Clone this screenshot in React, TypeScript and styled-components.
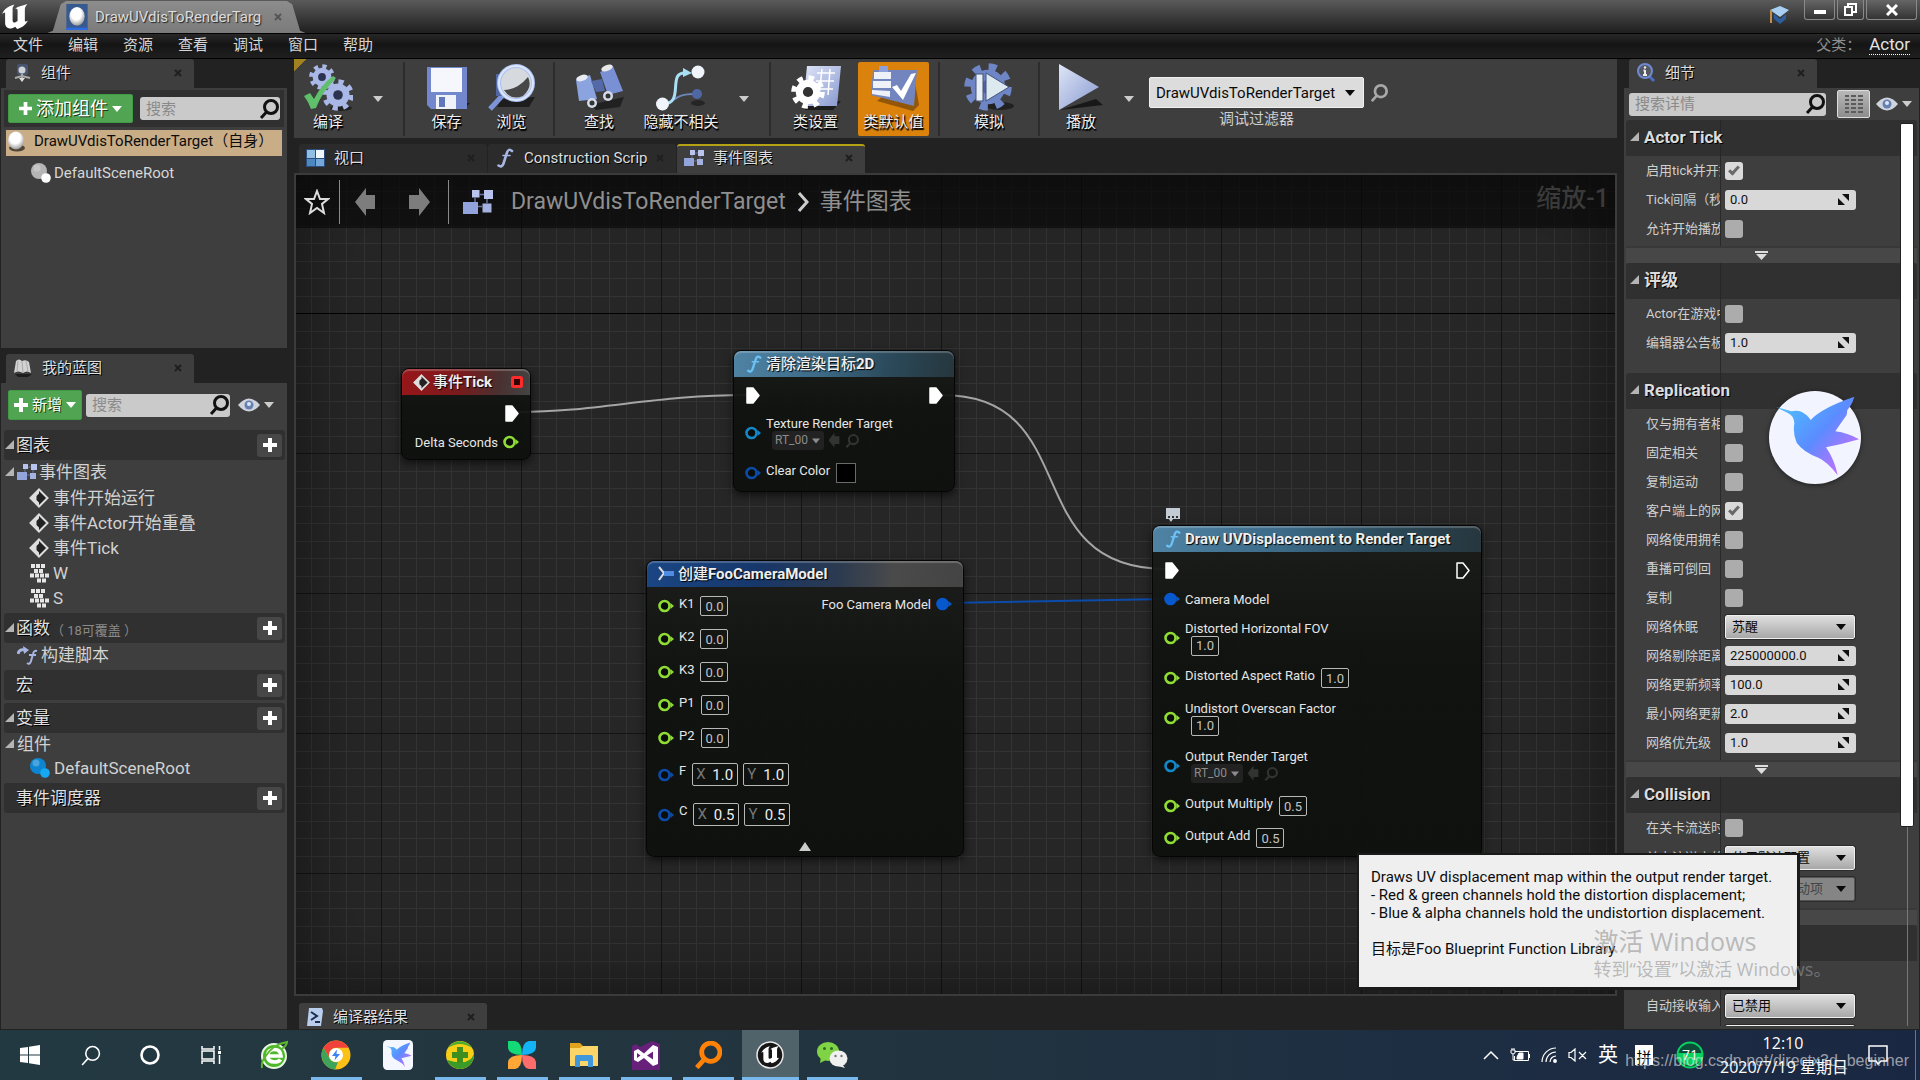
import React from "react";
import styled, { createGlobalStyle, css } from "styled-components";

const UI = `Roboto, "Noto Sans CJK SC", sans-serif`;
const SHELL = `"Open Sans", "Noto Sans CJK SC", sans-serif`;

const Global = createGlobalStyle`
  *, *::before, *::after { box-sizing: border-box; }
  body { margin: 0; background: #222; }
  button, input, select { font: inherit; color: inherit; margin: 0; }
  button { cursor: pointer; }
  svg { display: block; flex: none; }
  h1, h2, p, ul { margin: 0; padding: 0; font: inherit; list-style: none; }
`;

/* ---------- shell ---------- */
const Screen = styled.div`
  position: relative;
  display: grid;
  grid-template-rows: 34px 25px minmax(0, 1fr) 50px;
  height: 100vh;
  overflow: hidden;
  background: #222;
  color: #d6d6d6;
  font: 15px/20px ${UI};
`;
const TitleBar = styled.header`
  display: flex;
  align-items: flex-start;
  height: 34px;
  background: linear-gradient(#5a5a5a, #484848 30%, #212121 95%);
  border-bottom: 1px solid #000;
  overflow: hidden;
`;
const LogoBox = styled.div`
  width: 45px;
  height: 33px;
  padding: 4px 0 0 2px;
  flex: none;
`;
const DocTab = styled.div`
  display: flex;
  align-items: center;
  gap: 7px;
  width: 263px;
  height: 33px;
  padding: 0 26px 2px 21px;
  margin-top: 1px;
  background: linear-gradient(#8c8c8c, #7a7a7a);
  clip-path: polygon(0 100%, 3% 90%, 6% 10%, 8% 0, 92% 0, 94% 10%, 97% 90%, 100% 100%);
  color: #dcdcdc;
  text-shadow: 1px 1px 1px #222;
  white-space: nowrap;
`;
const DocName = styled.span`
  flex: 1;
`;
const Spacer = styled.div`
  flex: 1;
`;
const Graduate = styled.div`
  padding: 5px 15px 0 0;
`;
const WinControls = styled.div`
  display: flex;
  gap: 2px;
  padding-right: 3px;
`;
const WinButton = styled.button<{ $w: number }>`
  display: grid;
  place-items: center;
  width: ${(p) => p.$w}px;
  height: 20px;
  padding: 0;
  border: 1px solid #8a8a8a;
  border-top: 0;
  border-radius: 0 0 3px 3px;
  background: linear-gradient(#666, #333);
`;
const MenuBar = styled.nav`
  display: flex;
  align-items: center;
  padding: 0 10px 3px 13px;
  background: linear-gradient(#272727, #151515 45%, #1f1f1f);
  border-bottom: 1px solid #000;
`;
const MenuItem = styled.button`
  width: 55px;
  padding: 0;
  border: 0;
  background: none;
  text-align: left;
  line-height: 20px;
`;
const ParentLabel = styled.span`
  padding-right: 8px;
  color: #8e8e8e;
`;
const ParentLink = styled.a`
  color: #e2e2e2;
  font-size: 17px;
  line-height: 19px;
  text-decoration: none;
  border-bottom: 1px dotted #fff;
`;
const Main = styled.main`
  display: grid;
  grid-template-columns: 286px minmax(0, 1fr) 295px;
  gap: 7px;
  padding: 0 1px 1px;
  min-height: 0;
`;
const Column = styled.div`
  display: flex;
  flex-direction: column;
  min-width: 0;
  min-height: 0;
`;

/* ---------- tabs and panels ---------- */
const TabStrip = styled.div<{ $top?: number; $cut?: boolean }>`
  display: flex;
  gap: 1px;
  flex: none;
  height: ${(p) => (p.$cut ? "33px" : "auto")};
  overflow: hidden;
  padding: ${(p) => p.$top ?? 0}px 0 0 5px;
`;
const TabBox = styled.div<{ $idle?: boolean; $marked?: boolean }>`
  display: flex;
  align-items: center;
  gap: 9px;
  width: 188px;
  height: 29px;
  padding: 0 12px 3px 7px;
  background: ${(p) => (p.$idle ? "#2b2b2b" : "#3e3e3e")};
  border-top: 2px solid ${(p) => (p.$marked ? "#b5a114" : "transparent")};
  border-radius: 3px 3px 0 0;
  color: #dedede;
  text-shadow: 1px 1px 0 #000;
`;
const TabName = styled.span`
  flex: 1;
  overflow: hidden;
  white-space: nowrap;
`;
const Panel = styled.section<{ $grow?: boolean }>`
  display: flex;
  flex-direction: column;
  ${(p) => (p.$grow ? "flex: 1; min-height: 0;" : "height: 260px;")}
  background: #3e3e3e;
  overflow: hidden;
`;
const barKinds = {
  dark: "height: 37px; margin: 2px 3px 3px; background: #303030;",
  tall: "height: 44px; margin: 0 3px 3px;",
  slim: "height: 32px; margin: 0 3px 0 1px;",
};
const PanelBar = styled.div<{ $kind: keyof typeof barKinds }>`
  display: flex;
  align-items: center;
  gap: 4px;
  flex: none;
  padding: 0 4px;
  ${(p) => barKinds[p.$kind]}
`;
const GreenButton = styled.button<{ $big?: boolean }>`
  display: flex;
  align-items: center;
  justify-content: center;
  gap: 4px;
  width: ${(p) => (p.$big ? 125 : 74)}px;
  height: ${(p) => (p.$big ? 29 : 30)}px;
  padding: 0;
  border: 1px solid #3f9c45;
  border-radius: 2px;
  background: #50a452;
  color: #fff;
  font-size: ${(p) => (p.$big ? 18 : 15)}px;
  text-shadow: 1px 1px 0 #143d16;
  white-space: nowrap;
`;
const SearchBox = styled.label<{ $push?: boolean }>`
  display: flex;
  align-items: center;
  flex: 1;
  height: 23px;
  margin-left: ${(p) => (p.$push ? 3 : 0)}px;
  padding: 0 1px 0 6px;
  border-radius: 3px;
  background: #cacaca;
  min-width: 0;
`;
const SearchInput = styled.input`
  flex: 1;
  min-width: 0;
  padding: 0;
  border: 0;
  outline: 0;
  background: none;
  color: #222;
  &::placeholder { color: #8a8a8a; }
`;
const IconButton = styled.button<{ $roomy?: boolean }>`
  display: flex;
  align-items: center;
  gap: 4px;
  margin: ${(p) => (p.$roomy ? "0 6px 0 4px" : 0)};
  padding: 0;
  border: 0;
  background: none;
`;
const SelectedRow = styled.div`
  display: flex;
  align-items: center;
  gap: 9px;
  height: 26px;
  margin: 0 5px;
  padding: 0 0 4px 1px;
  background: #c8ad87;
  color: #0c0c0c;
  white-space: nowrap;
`;
const ChildRow = styled.div`
  display: flex;
  align-items: center;
  gap: 3px;
  height: 34px;
  padding-left: 29px;
`;
const ListHead = styled.div<{ $gap?: number }>`
  display: flex;
  align-items: center;
  gap: 1px;
  height: 30px;
  margin: ${(p) => p.$gap ?? 0}px 2px 0 3px;
  padding: 0 3px 0 1px;
  background: #303030;
  border-radius: 3px;
  font-size: 17px;
  color: #e0e0e0;
  text-shadow: 1px 1px 0 #000;
`;
const Note = styled.small`
  padding-top: 5px;
  font-size: 13px;
  color: #8a8a8a;
  text-shadow: none;
`;
const PlusButton = styled.button`
  display: grid;
  place-items: center;
  width: 25px;
  height: 23px;
  margin-left: auto;
  padding: 0;
  border: 0;
  border-radius: 3px;
  background: #474747;
`;
const TreeRow = styled.li<{ $indent?: boolean; $h?: number }>`
  display: flex;
  align-items: center;
  gap: ${(p) => (p.$indent ? 4 : 2)}px;
  height: ${(p) => p.$h ?? 25}px;
  padding: 0 0 2px ${(p) => (p.$indent ? 28 : 4)}px;
  font-size: 17px;
  color: #d2d2d2;
`;
const CaretSlot = styled.span`
  width: 10px;
  flex: none;
`;

/* ---------- toolbar ---------- */
const Toolbar = styled.div`
  display: flex;
  flex: none;
  height: 79px;
  background: linear-gradient(135deg, #a28120 9px, transparent 9px), #3e3e3e;
`;
const ToolButton = styled.button<{ $w: number; $on?: boolean }>`
  display: flex;
  flex-direction: column;
  align-items: center;
  flex: none;
  width: ${(p) => p.$w}px;
  padding: 4px 0 0;
  border: 0;
  border-radius: 2px;
  background: none;
  color: #eee;
  line-height: 23px;
  text-shadow: 1px 1px 1px #000, 1px 2px 1px #000;
  white-space: nowrap;
  ${(p) =>
    p.$on &&
    css`
      margin: 3px 0 2px 7px;
      padding-top: 1px;
      background: #da820c;
    `}
`;
const DropButton = styled.button`
  display: grid;
  place-items: center;
  width: 32px;
  padding: 0;
  border: 0;
  background: none;
`;
const Divider = styled.div`
  width: 2px;
  margin: 3px 9px 2px;
  background: #2c2c2c;
`;
const DebugArea = styled.div`
  display: grid;
  grid-template-columns: auto auto;
  align-content: start;
  align-items: center;
  column-gap: 6px;
  padding: 18px 0 0 4px;
`;
const DebugCaption = styled.label`
  padding-top: 1px;
  text-align: center;
  color: #cfcfcf;
`;
const SelectWrap = styled.span<{ $w?: number; $h?: number; $off?: boolean }>`
  display: inline-grid;
  align-items: center;
  width: ${(p) => p.$w ?? 130}px;
  height: ${(p) => p.$h ?? 24}px;
  border: 1px solid ${(p) => (p.$off ? "#555" : "#f0f0f0")};
  border-radius: 2px;
  outline: ${(p) => (p.$h ? "0" : "1px solid #2b2b2b")};
  background: ${(p) => (p.$off ? "#858585" : p.$h ? "#dcdcdc" : "linear-gradient(#dedede, #a8a8a8)")};
  color: ${(p) => (p.$off ? "#444" : "#0a0a0a")};
  & > * { grid-area: 1 / 1; }
  & > svg { justify-self: end; margin-right: 8px; pointer-events: none; }
`;
const SelectBase = styled.select`
  appearance: none;
  width: 100%;
  padding: 0 6px;
  border: 0;
  outline: 0;
  background: none;
  opacity: 1;
`;

/* ---------- graph ---------- */
const GraphFrame = styled.section`
  flex: 1;
  display: flex;
  min-height: 0;
  border: 2px solid #3b3b3b;
`;
const Canvas = styled.div`
  position: relative;
  flex: 1;
  overflow: hidden;
  background: #262626;
`;
const Backdrop = styled.svg`
  position: absolute;
  inset: 0;
  width: 100%;
  height: 100%;
`;
const Vignette = styled.div`
  position: absolute;
  inset: 0;
  box-shadow: inset 0 0 70px rgba(0, 0, 0, 0.5);
  pointer-events: none;
`;
const GraphBar = styled.div`
  position: relative;
  display: flex;
  align-items: center;
  height: 53px;
  padding: 0 6px 0 8px;
  background: rgba(8, 8, 8, 0.68);
  color: #8f8f8f;
  font-size: 23px;
  line-height: 30px;
`;
const BarLine = styled.div`
  width: 1px;
  height: 44px;
  margin: 0 14px 0 9px;
  background: #8a8a8a;
`;
const NavGroup = styled.div`
  display: flex;
  gap: 29px;
  padding-right: 8px;
`;
const NavButton = styled.button`
  padding: 0;
  border: 0;
  background: none;
`;
const Crumb = styled.h1`
  display: flex;
  align-items: center;
  gap: 11px;
  padding-left: 18px;
`;
const ZoomText = styled.span`
  margin-left: auto;
  padding-bottom: 6px;
  color: #3a3a3a;
  font-size: 25px;
  font-weight: 500;
`;
const NodeBox = styled.article<{ $x: number; $y: number; $w: number }>`
  position: absolute;
  left: ${(p) => p.$x}px;
  top: ${(p) => p.$y}px;
  width: ${(p) => p.$w}px;
  border: 1px solid #050505;
  border-radius: 8px;
  background: linear-gradient(rgba(28, 29, 28, 0.96), rgba(15, 18, 14, 0.94) 40%, rgba(13, 16, 13, 0.95));
  box-shadow: 0 3px 8px rgba(0, 0, 0, 0.6);
  color: #e6e6e6;
  font-size: 13px;
  line-height: 15px;
`;
const tones = {
  red: "linear-gradient(100deg, #98161a, #7a1a1c 45%, #4a3030 75%, #444)",
  blue: "linear-gradient(95deg, #1a4684, #17376a 35%, #2b3a50 60%, #4a4a4a 78%, #444)",
  cyan: "linear-gradient(95deg, #4f83a4, #3c6a87 40%, #2b4a5b 70%, #26363d)",
};
const NodeHead = styled.h2<{ $tone: keyof typeof tones }>`
  display: flex;
  align-items: center;
  height: 26px;
  padding: 0 7px 0 11px;
  border-radius: 7px 7px 0 0;
  background: ${(p) => tones[p.$tone]};
  box-shadow: inset 0 2px 1px rgba(255, 255, 255, 0.22);
  color: #efefef;
  font-size: 15px;
  font-weight: 700;
  text-shadow: 1px 1px 1px #000;
  white-space: nowrap;
  & > svg:first-child { margin-right: 3px; }
`;
const Han = styled.span`
  font-weight: 500;
`;
const ExecRow = styled.div`
  display: flex;
  align-items: center;
  justify-content: space-between;
  height: 36px;
  padding: 0 11px 0 12px;
`;
const PinList = styled.ul<{ $gap?: number; $top?: number }>`
  display: flex;
  flex-direction: column;
  gap: ${(p) => p.$gap ?? 12}px;
  padding: ${(p) => p.$top ?? 2}px 11px 8px;
`;
const PinRow = styled.li<{ $right?: boolean; $min?: number }>`
  display: flex;
  align-items: center;
  justify-content: ${(p) => (p.$right ? "flex-end" : "flex-start")};
  gap: 5px;
  min-height: ${(p) => p.$min ?? 18}px;
  white-space: nowrap;
`;
const PinBody = styled.div<{ $stack?: boolean }>`
  display: flex;
  flex-direction: ${(p) => (p.$stack ? "column" : "row")};
  gap: ${(p) => (p.$stack ? 0 : 6)}px;
  align-items: flex-start;
  & > *:nth-child(n + 2) { margin-left: ${(p) => (p.$stack ? 6 : 0)}px; }
`;
const ValueInput = styled.input`
  width: 28px;
  height: 20px;
  padding: 0;
  border: 1px solid #b8b8b8;
  border-radius: 2px;
  background: transparent;
  color: #c4c4c4;
  text-align: center;
`;
const AxisBox = styled.label`
  display: flex;
  align-items: center;
  width: 46px;
  height: 23px;
  margin-right: -1px;
  padding: 0 4px 0 3px;
  border: 1px solid #b8b8b8;
  border-radius: 2px;
  color: #777;
  font-size: 15px;
`;
const AxisInput = styled.input`
  width: 100%;
  min-width: 0;
  padding: 0;
  border: 0;
  background: none;
  color: #eee;
  text-align: right;
`;
const AssetRow = styled.div`
  display: flex;
  align-items: center;
  gap: 4px;
  height: 20px;
`;
const AssetButton = styled.button`
  display: flex;
  align-items: center;
  gap: 4px;
  height: 19px;
  padding: 0 4px 0 3px;
  border: 0;
  border-radius: 3px;
  background: #222;
  color: #8c8c8c;
  font-size: 12px;
`;
const Swatch = styled.input`
  appearance: none;
  width: 20px;
  height: 20px;
  padding: 0;
  border: 1px solid #6a6a6a;
  background: #000;
  &::-webkit-color-swatch-wrapper { padding: 0; }
  &::-webkit-color-swatch { border: 0; }
`;
const TwoSides = styled.div`
  display: flex;
  justify-content: space-between;
  align-items: flex-start;
`;
const FoldButton = styled.button`
  display: grid;
  place-items: center;
  width: 100%;
  height: 20px;
  padding: 0;
  border: 0;
  background: none;
`;
const Bubble = styled.div`
  position: absolute;
  left: 12px;
  top: -18px;
`;

/* ---------- details ---------- */
const DetailsBody = styled.div`
  display: flex;
  flex: 1;
  min-height: 0;
  margin: 0 2px 3px;
  overflow: hidden;
  position: relative;
`;
const DetailsList = styled.div`
  flex: 1;
  min-width: 0;
  font-size: 13px;
`;
const Category = styled.h2`
  display: flex;
  align-items: center;
  gap: 4px;
  height: 36px;
  padding: 0 0 2px 4px;
  background: linear-gradient(#262626, #262626) 94px 0 / 1px 100% no-repeat, #303030;
  border-radius: 3px 3px 0 0;
  color: #dcdcdc;
  font-size: 17px;
  font-weight: 700;
  text-shadow: 1px 1px 0 #000;
`;
const Rows = styled.div<{ $end?: number }>`
  padding-bottom: ${(p) => p.$end ?? 2}px;
  background: linear-gradient(#292929, #292929) 94px 0 / 1px 100% no-repeat;
`;
const PropRow = styled.div<{ $tall?: boolean }>`
  display: grid;
  grid-template-columns: 74px 1fr;
  column-gap: 5px;
  align-items: center;
  height: ${(p) => (p.$tall ? 31 : 29)}px;
  padding-left: 20px;
`;
const PropLabel = styled.label`
  overflow: hidden;
  white-space: nowrap;
  color: #cfcfcf;
`;
const Check = styled.input`
  appearance: none;
  display: grid;
  place-items: center;
  width: 18px;
  height: 18px;
  border-radius: 3px;
  background: #acacac;
  &:checked { background: #dadada; }
  &:checked::before {
    content: "";
    width: 6px;
    height: 11px;
    border: solid #6a6a6a;
    border-width: 0 3px 3px 0;
    transform: rotate(42deg);
    margin-top: -3px;
  }
`;
const NumberWrap = styled.span`
  display: flex;
  align-items: center;
  width: 131px;
  height: 20px;
  padding: 0 7px 0 5px;
  border-radius: 3px;
  background: #d8d8d8;
  color: #111;
`;
const NumberInput = styled.input`
  flex: 1;
  min-width: 0;
  padding: 0;
  border: 0;
  outline: 0;
  background: none;
`;
const MoreButton = styled.button`
  display: grid;
  place-items: center;
  width: 100%;
  height: 17px;
  padding: 0 20px 0 0;
  border: 0;
  border-top: 2px solid #383838;
  background: #474747;
`;
const ScrollTrack = styled.div`
  position: absolute;
  top: 3px;
  right: 3px;
  bottom: 0;
  width: 14px;
  background: linear-gradient(#777, #777) 7px 0 / 1px 100% no-repeat;
`;
const ScrollThumb = styled.div`
  height: 78%;
  border: 1px solid #222;
  border-radius: 2px;
  background: #fff;
`;
const GridButton = styled.button`
  display: grid;
  place-items: center;
  width: 33px;
  height: 28px;
  margin: 0 2px 0 7px;
  padding: 0;
  border: 1px solid #ddd;
  border-radius: 2px;
  background: linear-gradient(#b8b8b8, #8d8d8d);
`;

/* ---------- overlays ---------- */
const Tooltip = styled.div`
  position: absolute;
  right: 121px;
  bottom: 91px;
  min-width: 441px;
  padding: 13px 12px 29px;
  border: 2px solid #1a1a1a;
  border-width: 1px 2px 2px 1px;
  outline: 1px solid #1a1a1a;
  background: #efefef;
  color: #0c0c0c;
  line-height: 18px;
  white-space: pre;
`;
const Activate = styled.div`
  position: absolute;
  left: 83%;
  bottom: 99px;
  color: rgba(150, 150, 150, 0.62);
  font: 18px/24px ${SHELL};
  white-space: nowrap;
  pointer-events: none;
`;
const ActivateTitle = styled.p`
  font-size: 25px;
  line-height: 32px;
`;
const FloatingBird = styled.div`
  position: absolute;
  right: 59px;
  top: 391px;
  border-radius: 50%;
  box-shadow: 0 1px 5px rgba(0, 0, 0, 0.5);
`;
const SourceNote = styled.div`
  position: absolute;
  right: 11px;
  bottom: 9px;
  color: rgba(235, 235, 235, 0.62);
  font: 16px/20px "Liberation Sans", sans-serif;
  pointer-events: none;
`;

/* ---------- taskbar ---------- */
const Taskbar = styled.footer`
  display: flex;
  background: linear-gradient(90deg, #233941, #22343f 45%, #1e2f42 70%, #1a2742);
  color: #fff;
  font: 16px/24px ${SHELL};
`;
const TaskButton = styled.button<{ $w?: number; $run?: boolean; $active?: boolean }>`
  display: grid;
  place-items: center;
  flex: none;
  width: ${(p) => p.$w ?? 62}px;
  padding: 0;
  border: 0;
  background: none;
  ${(p) =>
    p.$run &&
    css`
      background:
        linear-gradient(#79b8ec, #79b8ec) 50% 100% / ${p.$active ? "57px" : "51px"} 3px no-repeat,
        linear-gradient(${p.$active ? "#50626a, #50626a" : "transparent, transparent"}) 50% 0 / 57px 100% no-repeat;
    `}
`;
const Tray = styled.div`
  display: flex;
  align-items: center;
  gap: 11px;
  margin-left: auto;
`;
const TrayText = styled.span`
  font-size: 20px;
`;
const Pinyin = styled.span`
  display: grid;
  place-items: center;
  width: 18px;
  height: 20px;
  margin: 0 12px 0 6px;
  background: #fff;
  color: #000;
  font-size: 15px;
`;
const Clock = styled.time`
  width: 126px;
  margin: 0 11px 0 5px;
  text-align: center;
  white-space: nowrap;
`;
const ShowDesktop = styled.button`
  width: 5px;
  height: 50px;
  margin-left: 16px;
  padding: 0;
  border: 0;
  border-left: 1px solid #6b7686;
  background: none;
`;

/* ---------- drawings ---------- */
const UnrealMark = () => (
  <path
    d="M0 10C2 5 6 2 12 0.500C10.500 2.500 10.200 3.500 10.200 5V15.500C10.200 17.500 11.500 18.200 13 17.500L15 16.300V6C15 4.500 14 4 12.500 4.800C15 2.300 19 1.800 24.500 0C22.200 2.500 22 3.800 22 5.500V15.500C22 17.200 23 17.200 25 15.800C23 20 19 23 14.500 24L12.800 21.800C10.500 23.300 8.500 23.800 6.500 23.300C4 22.500 3 20.500 3 18.500V9C3 7.500 1.500 8.300 0 10Z"
    fill="#fff"
  />
);
const Sphere = ({ s = 18, blue = false }: { s?: number; blue?: boolean }) => (
  <svg width={s} height={s + 4} viewBox="0 0 18 22">
    <defs>
      <radialGradient id="ball" cx=".45" cy=".35" r=".65">
        <stop offset=".5" stopColor="#fff" />
        <stop offset="1" stopColor="#999" />
      </radialGradient>
    </defs>
    {blue ? <rect width="18" height="22" fill="#36598f" /> : <ellipse cx="10" cy="18" rx="8" ry="3.500" fill="#0009" />}
    {blue && <rect y="20" width="18" height="2" fill="#2c6be0" />}
    <ellipse cx="9" cy="10.500" rx={blue ? 6.5 : 8} ry={blue ? 8 : 9} fill="url(#ball)" />
  </svg>
);
const SceneRoot = ({ c, d }: { c: string; d: string }) => (
  <svg width="21" height="22" viewBox="0 0 21 22">
    <circle cx="9" cy="9" r="8" fill={c} />
    <circle cx="7" cy="6" r="3.500" fill="#fff" opacity=".25" />
    <circle cx="16" cy="16" r="4.800" fill={d} />
  </svg>
);
const Cross = ({ c = "#1f1f1f" }: { c?: string }) => (
  <svg width="8" height="8" viewBox="0 0 8 8">
    <path d="M1 1L7 7M7 1L1 7" stroke={c} strokeWidth="2" />
  </svg>
);
const Plus = ({ s = 14 }: { s?: number }) => (
  <svg width={s} height={s} viewBox="0 0 14 14">
    <path d="M7 0V14M0 7H14" stroke="#fff" strokeWidth="4" />
  </svg>
);
const Down = ({ c = "#ccc", w = 10 }: { c?: string; w?: number }) => (
  <svg width={w} height="6" viewBox="0 0 10 6">
    <path d="M0 0H10L5 6Z" fill={c} />
  </svg>
);
const Corner = () => (
  <svg width="10" height="10" viewBox="0 0 10 10">
    <path d="M9 0V9H0Z" fill="#b4b4b4" />
  </svg>
);
const Lens = ({ s = 20, c = "#111", w = 3 }: { s?: number; c?: string; w?: number }) => (
  <svg width={s} height={s} viewBox="0 0 20 20" fill="none" stroke={c} strokeWidth={w}>
    <circle cx="12" cy="8" r="6.500" />
    <path d="M7.500 13L2 19" />
  </svg>
);
const Eye = () => (
  <svg width="22" height="14" viewBox="0 0 22 14">
    <path d="M0 7Q11-6 22 7Q11 20 0 7Z" fill="#cfd3dc" />
    <circle cx="11" cy="7" r="4.500" fill="#6580b3" />
    <circle cx="11" cy="6" r="2" fill="#dce6f8" />
  </svg>
);
const GraphIcon = ({ s = 20 }: { s?: number }) => (
  <svg width={s} height={s} viewBox="0 0 20 20">
    <g fill="#b9c4ee">
      <rect x="6" y="2" width="5" height="5" />
      <rect x="14" y="2" width="6" height="6" />
      <rect x="0" y="10" width="10" height="8" fill="#93a4dc" />
      <rect x="13" y="11" width="6" height="6" fill="#a4b2e2" />
    </g>
    <path d="M11 5H14M8 7V10M16 8V11M10 13H13" stroke="#69739b" fill="none" />
  </svg>
);
const EventIcon = ({ s = 20 }: { s?: number }) => (
  <svg width={s} height={s} viewBox="0 0 20 20">
    <path d="M10 1.500L18.500 10L10 18.500L1.500 10Z" fill="#222" stroke="#ddd" strokeWidth="2" />
    <path d="M10 1.500L1.500 10L10 18.500V14.500L7.500 12V8L10 5.500Z" fill="#ddd" />
  </svg>
);
const KeysIcon = () => (
  <svg width="20" height="20" viewBox="0 0 20 20" stroke="#e6e6e6" strokeWidth="4" strokeDasharray="4 1">
    <path d="M2 3H16M5 8H14M1 12.500H20M8 17.500H17" />
  </svg>
);
const Func = ({ s = 20, c = "#6cc0f5" }: { s?: number; c?: string }) => (
  <svg width={s} height={s} viewBox="0 0 20 20" fill="none" stroke={c} strokeLinecap="round">
    <path d="M17 3Q13.500 0 12 4.500L8.500 15.500Q7 20 3.500 17.500" strokeWidth="2.600" />
    <path d="M8 7.500H15" strokeWidth="1.600" />
  </svg>
);
const ConstructIcon = () => (
  <svg width="22" height="20" viewBox="0 0 22 20" fill="none" stroke="#a9b6e4" strokeWidth="2">
    <path d="M1 9Q2 4 7 5" strokeWidth="3" />
    <path d="M6 1L12 5L7 9Z" fill="#a9b6e4" stroke="none" />
    <path d="M20 6Q17 5 16 9L14 16Q13 20 10 18M12 10H19" />
  </svg>
);
const ComponentTabIcon = () => (
  <svg width="19" height="20" viewBox="0 0 19 20">
    <rect x="4" y="1" width="11" height="11" rx="2" fill="#47566e" />
    <circle cx="9" cy="7" r="3.500" fill="#cfd2d6" />
    <path d="M9 11V17M2 15L9 13L17 15" stroke="#aaa" strokeWidth="2" fill="none" />
    <path d="M6 15H12L9 19Z" fill="#ddd" />
  </svg>
);
const BookIcon = () => (
  <svg width="20" height="20" viewBox="0 0 20 20">
    <path d="M3 3Q6 0 9 3Q13 1 16 4L18 15Q14 12 10 15Q5 12 1 15Z" fill="#d2d2d2" />
    <path d="M9 3L10 15M5 3L4 13M13 3L15 13" stroke="#aaa" />
    <path d="M2 16H19L15 19H5Z" fill="#0008" />
  </svg>
);
const ViewportIcon = () => (
  <svg width="19" height="20" viewBox="0 0 19 20">
    <rect x="0" y="1" width="19" height="18" fill="#2b4c7c" />
    <rect x="1" y="2" width="8" height="8" fill="#8fc0e4" />
    <rect x="10" y="2" width="8" height="8" fill="#f0f6fa" />
    <rect x="1" y="11" width="8" height="7" fill="#4d88bf" />
    <rect x="10" y="11" width="8" height="7" fill="#74a8dc" />
  </svg>
);
const InfoIcon = () => (
  <svg width="20" height="20" viewBox="0 0 20 20">
    <path d="M13 13L18 18" stroke="#4b6cc0" strokeWidth="3" />
    <circle cx="9" cy="8" r="7" fill="#55585f" stroke="#6f8ad2" strokeWidth="2" />
    <path d="M9 7V12M7 12H11M7.500 7.500H9" stroke="#eee" strokeWidth="2" />
    <circle cx="9" cy="4.500" r="1.200" fill="#eee" />
  </svg>
);
const ResultIcon = () => (
  <svg width="18" height="20" viewBox="0 0 18 20">
    <path d="M3 1H16L17 4L15 19H1Z" fill="#b9cdec" />
    <path d="M5 5L11 9L5 13M9 15H14" stroke="#1c2e50" strokeWidth="2" fill="none" />
  </svg>
);
const gear = (cx: number, cy: number, r: number, fill: string, hole: string) => {
  const step = (2 * Math.PI * r * 0.82) / 16;
  return (
    <g>
      <circle cx={cx} cy={cy} r={r * 0.72} fill={fill} />
      <circle cx={cx} cy={cy} r={r * 0.82} fill="none" stroke={fill} strokeWidth={r * 0.34} strokeDasharray={`${step} ${step}`} />
      <circle cx={cx} cy={cy} r={r * 0.3} fill={hole} />
    </g>
  );
};
const Tool = ({ children }: { children: React.ReactNode }) => (
  <svg width="50" height="48" viewBox="0 0 50 48">
    <defs>
      <linearGradient id="steel" x1="0" y1="0" x2="1" y2="1">
        <stop offset="0" stopColor="#dfe6f8" />
        <stop offset="1" stopColor="#8798cf" />
      </linearGradient>
    </defs>
    {children}
  </svg>
);
const CompileArt = () => (
  <Tool>
    <ellipse cx="38" cy="45" rx="11" ry="3" fill="#0007" />
    {gear(19, 14, 13, "#a9b8e6", "#2b3350")}
    {gear(35, 32, 16, "#a9b8e6", "#2b3350")}
    <path d="M1 33L7 30L11 36Q18 22 30 13L33 15Q19 29 13 45L8 46Q5 38 1 33Z" fill="#5fbf6b" />
  </Tool>
);
const SaveArt = () => (
  <Tool>
    <path d="M10 40H48L42 46H12Z" fill="#0008" />
    <path d="M5 4H45V46H9L5 42Z" fill="#7388cc" />
    <rect x="9" y="5" width="31" height="24" fill="#f5f7fd" />
    <rect x="14" y="32" width="20" height="14" fill="#f0f2fa" />
    <rect x="17" y="34" width="6" height="10" fill="#6076bd" />
  </Tool>
);
const BrowseArt = () => (
  <Tool>
    <path d="M14 36L48 34L42 44H10Z" fill="#0008" />
    <path d="M16 32L3 46" stroke="#7d94d8" strokeWidth="5" />
    <rect x="9" y="11" width="14" height="22" fill="#5066a0" />
    <circle cx="29" cy="20" r="17" fill="#d6d9de" stroke="#a9bff0" strokeWidth="4" />
    <path d="M17 27Q30 27 41 14Q46 24 36 33Q24 38 17 27Z" fill="#474747" />
    <circle cx="29" cy="20" r="17" fill="none" stroke="#dce7fb" strokeWidth="2" />
  </Tool>
);
const FindArt = () => (
  <Tool>
    <path d="M16 42L50 34L46 44L22 47Z" fill="#0007" />
    <path d="M2 17L16 12L23 36L5 38Z" fill="#8ba3de" />
    <path d="M26 9L39 3L49 28L34 32Z" fill="#7991d4" />
    <path d="M17 18L28 16L31 28L22 29Z" fill="#5469a8" />
    <ellipse cx="8" cy="15" rx="6" ry="3" fill="#e8ebf2" transform="rotate(-18 8 15)" />
    <ellipse cx="33" cy="5" rx="6" ry="3" fill="#e8e8e8" transform="rotate(-20 33 5)" />
    <circle cx="18" cy="40" r="5" fill="#d5dbe8" />
    <circle cx="18" cy="40" r="2.500" fill="#333" />
    <circle cx="34" cy="33" r="5" fill="#d5dbe8" />
    <circle cx="34" cy="33" r="2.500" fill="#333" />
  </Tool>
);
const HideArt = () => (
  <Tool>
    <ellipse cx="42" cy="40" rx="7" ry="3" fill="#0006" />
    <path d="M6 41C20 40 18 30 40 31" stroke="#6c85b8" strokeWidth="2" fill="none" />
    <path d="M6 41C30 42 10 8 30 10" stroke="#a8e0f6" strokeWidth="3" fill="none" />
    <path d="M27 5L36 10L27 14Z" fill="#a8e0f6" />
    <circle cx="42" cy="9" r="6.500" fill="#f0f4fb" />
    <circle cx="6.500" cy="41" r="6.500" fill="#f0f4fb" />
    <circle cx="41" cy="31" r="5" fill="#4f67a4" />
  </Tool>
);
const SettingsArt = () => (
  <Tool>
    <path d="M12 40L50 38L42 47H14Z" fill="#0008" />
    <path d="M16 3H50L46 43H12Z" fill="url(#steel)" />
    <path d="M26 10H44M25 18H43M24 26H42M31 6L28 32M39 6L37 32" stroke="#fff" strokeWidth="1.500" />
    {gear(17, 29, 17, "#fff", "#333")}
  </Tool>
);
const DefaultsArt = () => (
  <Tool>
    <path d="M8 38L44 48L50 42L44 8Z" fill="#0005" />
    <path d="M4 7H48L45 43L2 32Z" fill="#7285bf" />
    <rect x="10" y="3" width="9" height="6" fill="#8da0db" />
    <path d="M5 9H22V16H5ZM4 18H22V25H4ZM3 27L21 28V34L3 31Z" fill="#eef1f8" />
    <path d="M23 24L28 22L32 28L42 11L47 10L34 37Z" fill="#fff" />
  </Tool>
);
const SimulateArt = () => (
  <Tool>
    <ellipse cx="36" cy="43" rx="14" ry="4" fill="#0007" />
    {gear(24, 24, 24, "#6f86c6", "#51659c")}
    <rect x="12" y="11" width="7" height="27" fill="#e9f0f4" stroke="#43537d" />
    <path d="M22 10L45 24L22 38Z" fill="#dceaf0" stroke="#43537d" />
  </Tool>
);
const PlayArt = () => (
  <Tool>
    <path d="M4 47L47 42L40 36Z" fill="#0009" />
    <path d="M3 1L43 24L3 47Z" fill="url(#steel)" />
  </Tool>
);
const ExecPin = ({ open = false }: { open?: boolean }) => (
  <svg width="14" height="17" viewBox="0 0 14 17">
    <path d="M1 1H7L13 8.500L7 16H1Z" fill={open ? "none" : "#fff"} stroke="#fff" strokeWidth="1.500" strokeLinejoin="round" />
  </svg>
);
const pinColors = { green: "#8fdc35", blue: "#0b4cab", sky: "#1288c8", solid: "#0758cd" };
const Pin = ({ kind }: { kind: keyof typeof pinColors }) => (
  <svg width="16" height="14" viewBox="0 0 16 14">
    <circle cx="6.500" cy="7" r="5" fill={kind === "solid" ? pinColors.solid : "#0a0d0a"} stroke={pinColors[kind]} strokeWidth="2.600" />
    <path d="M12.500 4L16 7L12.500 10Z" fill={pinColors[kind]} />
  </svg>
);
const Arrow = ({ flip = false, s = 24, c = "#7d7d7d" }: { flip?: boolean; s?: number; c?: string }) => (
  <svg width={s} height={s * 1.25} viewBox="0 0 24 30">
    <path d={flip ? "M23 15L12 1V8H2V22H12V29Z" : "M1 15L12 1V8H21V22H12V29Z"} fill={c} />
  </svg>
);
const BirdShape = ({ id }: { id: string }) => (
  <>
    <defs>
      <linearGradient id={id} x1=".1" y1=".2" x2=".85" y2=".85">
        <stop offset="0" stopColor="#4fb8ff" />
        <stop offset=".5" stopColor="#5b8cff" />
        <stop offset="1" stopColor="#c070ff" />
      </linearGradient>
    </defs>
    <path
      d="M528 141L574 154Q590 150 604 155Q622 164 632 180Q662 145 763 110Q756 134 742 150L740 165Q722 190 706 214Q742 218 777 238Q730 252 678 262Q704 300 713 346Q684 306 655 293Q610 276 590 248Q578 222 583 190Q582 166 562 158Z"
      fill={`url(#${id})`}
    />
  </>
);

/* ---------- reusable parts ---------- */
const Tab = ({ icon, name, idle, marked }: { icon: React.ReactNode; name: string; idle?: boolean; marked?: boolean }) => (
  <TabBox $idle={idle} $marked={marked}>
    {icon}
    <TabName>{name}</TabName>
    <Cross />
  </TabBox>
);
const Section = ({ name, note, gap, caret = true }: { name: string; note?: string; gap?: number; caret?: boolean }) => (
  <ListHead $gap={gap}>
    {caret ? <Corner /> : <CaretSlot />}
    {name}
    {note && <Note>{note}</Note>}
    <PlusButton aria-label={`添加${name}`}>
      <Plus />
    </PlusButton>
  </ListHead>
);
const FloatPin = ({ name, value, stack }: { name: string; value: string; stack?: boolean }) => (
  <PinRow $min={stack ? 36 : 20}>
    <Pin kind="green" />
    <PinBody $stack={stack}>
      <span>{name}</span>
      <ValueInput aria-label={name} defaultValue={value} />
    </PinBody>
  </PinRow>
);
const VectorPin = ({ name, value }: { name: string; value: string }) => (
  <PinRow $min={27}>
    <Pin kind="blue" />
    <PinBody>
      <span>{name}</span>
      {["X", "Y"].map((axis) => (
        <AxisBox key={axis}>
          {axis}
          <AxisInput defaultValue={value} />
        </AxisBox>
      ))}
    </PinBody>
  </PinRow>
);
const AssetPin = ({ name }: { name: string }) => (
  <PinRow $min={36}>
    <Pin kind="sky" />
    <PinBody $stack>
      <span>{name}</span>
      <AssetRow>
        <AssetButton>
          RT_00
          <Down c="#8c8c8c" w={8} />
        </AssetButton>
        <Arrow s={13} c="#333" />
        <Lens s={14} c="#333" />
      </AssetRow>
    </PinBody>
  </PinRow>
);
const Select = ({ id, value, w, h, off }: { id: string; value: string; w?: number; h?: number; off?: boolean }) => (
  <SelectWrap $w={w} $h={h} $off={off}>
    <SelectBase id={id} disabled={off}>
      <option>{value}</option>
    </SelectBase>
    <Down c="#0a0a0a" />
  </SelectWrap>
);
type Prop = { name: string; kind: "check" | "on" | "num" | "pick" | "off"; value?: string; tall?: boolean };
const Property = ({ name, kind, value = "", tall }: Prop) => {
  const id = `prop-${name}`;
  return (
    <PropRow $tall={tall}>
      <PropLabel htmlFor={id}>{name}</PropLabel>
      {(kind === "check" || kind === "on") && <Check id={id} type="checkbox" defaultChecked={kind === "on"} />}
      {kind === "num" && (
        <NumberWrap>
          <NumberInput id={id} defaultValue={value} />
          <svg width="11" height="11" viewBox="0 0 11 11">
            <path d="M4 0H11V7L8 4L7 3ZM0 4L3 7L7 11H0Z" fill="#111" />
          </svg>
        </NumberWrap>
      )}
      {(kind === "pick" || kind === "off") && <Select id={id} value={value} off={kind === "off"} />}
    </PropRow>
  );
};
const More = () => (
  <MoreButton aria-label="展开">
    <svg width="13" height="9" viewBox="0 0 13 9">
      <path d="M0 0H13V2H0ZM1 3H12L6.500 9Z" fill="#ddd" />
    </svg>
  </MoreButton>
);

const groups: { title: string; rows: Prop[]; end: number; more: boolean }[] = [
  {
    title: "Actor Tick",
    end: 3,
    more: true,
    rows: [
      { name: "启用tick并开始", kind: "on" },
      { name: "Tick间隔（秒）", kind: "num", value: "0.0" },
      { name: "允许开始播放前", kind: "check" },
    ],
  },
  {
    title: "评级",
    end: 16,
    more: false,
    rows: [
      { name: "Actor在游戏中隐藏", kind: "check" },
      { name: "编辑器公告板缩放", kind: "num", value: "1.0" },
    ],
  },
  {
    title: "Replication",
    end: 3,
    more: true,
    rows: [
      { name: "仅与拥有者相关", kind: "check" },
      { name: "固定相关", kind: "check" },
      { name: "复制运动", kind: "check" },
      { name: "客户端上的网络", kind: "on" },
      { name: "网络使用拥有者", kind: "check" },
      { name: "重播可倒回", kind: "check" },
      { name: "复制", kind: "check" },
      { name: "网络休眠", kind: "pick", value: "苏醒" },
      { name: "网络剔除距离平方", kind: "num", value: "225000000.0" },
      { name: "网络更新频率", kind: "num", value: "100.0" },
      { name: "最小网络更新频率", kind: "num", value: "2.0" },
      { name: "网络优先级", kind: "num", value: "1.0" },
    ],
  },
  {
    title: "Collision",
    end: 4,
    more: true,
    rows: [
      { name: "在关卡流送时生成", kind: "check" },
      { name: "关卡流送中的更新", kind: "pick", value: "使用默认配置", tall: true },
      { name: "默认更新重叠方法", kind: "off", value: "仅更新可移动项", tall: true },
    ],
  },
  {
    title: "输入",
    end: 0,
    more: false,
    rows: [
      { name: "阻挡输入", kind: "check" },
      { name: "自动接收输入", kind: "pick", value: "已禁用", tall: true },
      { name: "输入优先级", kind: "pick", value: "", tall: true },
    ],
  },
];

const Petals = () => (
  <svg width="30" height="30" viewBox="0 0 30 30">
    <path d="M1 1H8Q15 2 15 15Q2 15 1 8Z" fill="#14d977" />
    <path d="M29 1H22Q15 2 15 15Q28 15 29 8Z" fill="#12b4f5" />
    <path d="M1 29H8Q15 28 15 15Q2 15 1 22Z" fill="#ffa636" />
    <path d="M29 29H22Q15 28 15 15Q28 15 29 22Z" fill="#ff6c6c" />
  </svg>
);

export default function App() {
  return (
    <Screen>
      <Global />
      <TitleBar>
        <LogoBox>
          <svg width="27" height="25" viewBox="0 0 26 24">
            <UnrealMark />
          </svg>
        </LogoBox>
        <DocTab>
          <Sphere s={22} blue />
          <DocName>DrawUVdisToRenderTarg</DocName>
          <Cross c="#555" />
        </DocTab>
        <Spacer />
        <Graduate>
          <svg width="20" height="20" viewBox="0 0 20 20">
            <path d="M5 9L11 14L17 9V14L11 19L5 14Z" fill="#2d5f9c" />
            <path d="M1 5L11 1L20 5L11 12Z" fill="#a9d0f2" />
            <path d="M2 5V18" stroke="#c09048" strokeWidth="2" />
          </svg>
        </Graduate>
        <WinControls>
          <WinButton $w={31} aria-label="最小化">
            <svg width="12" height="12" viewBox="0 0 12 12"><path d="M0 6H12V10H0Z" fill="#fff" /></svg>
          </WinButton>
          <WinButton $w={27} aria-label="还原">
            <svg width="13" height="13" viewBox="0 0 13 13" fill="none" stroke="#fff" strokeWidth="2"><path d="M1 4H8V12H1ZM4 4V1H12V9H8" /></svg>
          </WinButton>
          <WinButton $w={51} aria-label="关闭">
            <svg width="12" height="12" viewBox="0 0 12 12"><path d="M1 1L11 11M11 1L1 11" stroke="#fff" strokeWidth="3" /></svg>
          </WinButton>
        </WinControls>
      </TitleBar>

      <MenuBar>
        {["文件", "编辑", "资源", "查看", "调试", "窗口", "帮助"].map((m) => (
          <MenuItem key={m}>{m}</MenuItem>
        ))}
        <Spacer />
        <ParentLabel>父类：</ParentLabel>
        <ParentLink href="#actor">Actor</ParentLink>
      </MenuBar>

      <Main>
        <Column>
          <TabStrip>
            <Tab icon={<ComponentTabIcon />} name="组件" />
          </TabStrip>
          <Panel>
            <PanelBar $kind="dark">
              <GreenButton $big>
                <Plus s={13} />
                添加组件
                <Down c="#fff" />
              </GreenButton>
              <SearchBox $push>
                <SearchInput placeholder="搜索" aria-label="搜索组件" />
                <Lens />
              </SearchBox>
            </PanelBar>
            <SelectedRow>
              <Sphere />
              DrawUVdisToRenderTarget（自身）
            </SelectedRow>
            <ChildRow>
              <SceneRoot c="#b5b5b5" d="#fff" />
              DefaultSceneRoot
            </ChildRow>
          </Panel>
          <TabStrip $top={6}>
            <Tab icon={<BookIcon />} name="我的蓝图" />
          </TabStrip>
          <Panel $grow>
            <PanelBar $kind="tall">
              <GreenButton>
                <Plus />
                新增
                <Down c="#fff" />
              </GreenButton>
              <SearchBox>
                <SearchInput placeholder="搜索" aria-label="搜索蓝图" />
                <Lens />
              </SearchBox>
              <IconButton $roomy aria-label="视图选项">
                <Eye />
                <Down />
              </IconButton>
            </PanelBar>
            <Section name="图表" />
            <ul>
              <TreeRow $h={26}>
                <Corner />
                <GraphIcon />
                事件图表
              </TreeRow>
              <TreeRow $indent><EventIcon />事件开始运行</TreeRow>
              <TreeRow $indent><EventIcon />事件Actor开始重叠</TreeRow>
              <TreeRow $indent><EventIcon />事件Tick</TreeRow>
              <TreeRow $indent><KeysIcon />W</TreeRow>
              <TreeRow $indent><KeysIcon />S</TreeRow>
            </ul>
            <Section name="函数" note="（ 18可覆盖 ）" gap={2} />
            <ul>
              <TreeRow $h={26}>
                <CaretSlot />
                <ConstructIcon />
                构建脚本
              </TreeRow>
            </ul>
            <Section name="宏" caret={false} gap={1} />
            <Section name="变量" gap={3} />
            <ul>
              <TreeRow $h={24}><Corner />组件</TreeRow>
              <TreeRow $h={24} $indent><SceneRoot c="#0c86d2" d="#17a8f4" />DefaultSceneRoot</TreeRow>
            </ul>
            <Section name="事件调度器" caret={false} gap={2} />
          </Panel>
        </Column>

        <Column>
          <Toolbar>
            <ToolButton $w={68}><CompileArt />编译</ToolButton>
            <DropButton aria-label="编译选项"><Down /></DropButton>
            <Divider />
            <ToolButton $w={65}><SaveArt />保存</ToolButton>
            <ToolButton $w={65}><BrowseArt />浏览</ToolButton>
            <Divider />
            <ToolButton $w={70}><FindArt />查找</ToolButton>
            <ToolButton $w={94}><HideArt />隐藏不相关</ToolButton>
            <DropButton aria-label="隐藏选项"><Down /></DropButton>
            <Divider />
            <ToolButton $w={71}><SettingsArt />类设置</ToolButton>
            <ToolButton $w={71} $on><DefaultsArt />类默认值</ToolButton>
            <Divider />
            <ToolButton $w={80}><SimulateArt />模拟</ToolButton>
            <Divider />
            <ToolButton $w={64}><PlayArt />播放</ToolButton>
            <DropButton aria-label="播放选项"><Down /></DropButton>
            <DebugArea>
              <Select id="debug" value="DrawUVdisToRenderTarget" w={215} h={31} />
              <Lens s={18} c="#a8a8a8" />
              <DebugCaption htmlFor="debug">调试过滤器</DebugCaption>
            </DebugArea>
          </Toolbar>
          <TabStrip $top={6}>
            <Tab icon={<ViewportIcon />} name="视口" idle />
            <Tab icon={<Func c="#a9b6e4" />} name="Construction Scrip" idle />
            <Tab icon={<GraphIcon />} name="事件图表" marked />
          </TabStrip>
          <GraphFrame>
            <Canvas>
              <Backdrop>
                <defs>
                  <pattern id="grid" x="85" y="138" width="140" height="140" patternUnits="userSpaceOnUse">
                    {[18, 35, 53, 70, 88, 105, 123].map((v) => (
                      <path key={v} d={`M${v} 0h1v140h-1ZM0 ${v}h140v1h-140Z`} fill="#333" />
                    ))}
                    <path d="M0 0h1v140h-1ZM0 0h140v1h-140Z" fill="#141414" />
                  </pattern>
                </defs>
                <rect width="100%" height="100%" fill="url(#grid)" />
                <rect y="138" width="100%" height="1" fill="#000" />
              </Backdrop>
              <Vignette />
              <Backdrop fill="none" strokeWidth="2">
                <path d="M222 237C300 237 360 220 450 220" stroke="#a5a5a5" />
                <path d="M646 220C790 220 720 394 870 394" stroke="#a5a5a5" />
                <path d="M650 428L870 424" stroke="#0b4cab" />
              </Backdrop>
              <GraphBar>
                <svg width="26" height="26" viewBox="0 0 26 26">
                  <path d="M13 2L16 10H24L18 15L20 24L13 19L6 24L8 15L2 10H10Z" fill="none" stroke="#ddd" strokeWidth="2" />
                </svg>
                <BarLine />
                <NavGroup>
                  <NavButton aria-label="后退"><Arrow /></NavButton>
                  <NavButton aria-label="前进"><Arrow flip /></NavButton>
                </NavGroup>
                <BarLine />
                <GraphIcon s={30} />
                <Crumb>
                  DrawUVdisToRenderTarget
                  <svg width="12" height="20" viewBox="0 0 12 20"><path d="M2 1L10 10L2 19" fill="none" stroke="#ccc" strokeWidth="3" /></svg>
                  事件图表
                </Crumb>
                <ZoomText>缩放-1</ZoomText>
              </GraphBar>

              <NodeBox $x={105} $y={193} $w={130}>
                <NodeHead $tone="red">
                  <EventIcon s={17} />
                  <Han>事件</Han>Tick
                  <Spacer />
                  <svg width="12" height="12" viewBox="0 0 12 12"><rect x="1.500" y="1.500" width="9" height="9" rx="1" fill="#300" stroke="#ff2b2b" strokeWidth="3" /></svg>
                </NodeHead>
                <ExecRow><span /><ExecPin /></ExecRow>
                <PinList>
                  <PinRow $right>Delta Seconds<Pin kind="green" /></PinRow>
                </PinList>
              </NodeBox>

              <NodeBox $x={437} $y={175} $w={222}>
                <NodeHead $tone="cyan"><Func s={18} /><Han>清除渲染目标</Han>2D</NodeHead>
                <ExecRow><ExecPin /><ExecPin /></ExecRow>
                <PinList>
                  <AssetPin name="Texture Render Target" />
                  <PinRow>
                    <Pin kind="blue" />
                    <PinBody>
                      <label htmlFor="clear">Clear Color</label>
                      <Swatch id="clear" type="color" defaultValue="#000000" />
                    </PinBody>
                  </PinRow>
                </PinList>
              </NodeBox>

              <NodeBox $x={350} $y={385} $w={318}>
                <NodeHead $tone="blue">
                  <svg width="17" height="16" viewBox="0 0 17 16">
                    <path d="M1 1L6 7L1 14" fill="none" stroke="#ddd" strokeWidth="2" />
                    <rect x="6" y="5" width="10" height="5" fill="#4f8be0" />
                  </svg>
                  <Han>创建</Han>FooCameraModel
                </NodeHead>
                <TwoSides>
                  <PinList $gap={13} $top={9}>
                    {["K1", "K2", "K3", "P1", "P2"].map((n) => (
                      <FloatPin key={n} name={n} value="0.0" />
                    ))}
                    <VectorPin name="F" value="1.0" />
                    <VectorPin name="C" value="0.5" />
                  </PinList>
                  <PinList $top={8}>
                    <PinRow $right>Foo Camera Model<Pin kind="solid" /></PinRow>
                  </PinList>
                </TwoSides>
                <FoldButton aria-label="折叠">
                  <svg width="12" height="9" viewBox="0 0 12 9"><path d="M6 0L12 9H0Z" fill="#ccc" /></svg>
                </FoldButton>
              </NodeBox>

              <NodeBox $x={856} $y={350} $w={330}>
                <Bubble>
                  <svg width="16" height="14" viewBox="0 0 16 14">
                    <path d="M1 0H15V11H8L6 14L4 11H1Z" fill="#c3ccd4" />
                    <path d="M3 9H5M7 9H9M11 9H13" stroke="#333" strokeWidth="2" />
                  </svg>
                </Bubble>
                <NodeHead $tone="cyan"><Func s={18} />Draw UVDisplacement to Render Target</NodeHead>
                <ExecRow><ExecPin /><ExecPin open /></ExecRow>
                <PinList>
                  <PinRow><Pin kind="solid" />Camera Model</PinRow>
                  <FloatPin name="Distorted Horizontal FOV" value="1.0" stack />
                  <FloatPin name="Distorted Aspect Ratio" value="1.0" />
                  <FloatPin name="Undistort Overscan Factor" value="1.0" stack />
                  <AssetPin name="Output Render Target" />
                  <FloatPin name="Output Multiply" value="0.5" />
                  <FloatPin name="Output Add" value="0.5" />
                </PinList>
              </NodeBox>
            </Canvas>
          </GraphFrame>
          <TabStrip $top={7} $cut>
            <Tab icon={<ResultIcon />} name="编译器结果" />
          </TabStrip>
        </Column>

        <Column>
          <TabStrip>
            <Tab icon={<InfoIcon />} name="细节" />
          </TabStrip>
          <Panel $grow>
            <PanelBar $kind="slim">
              <SearchBox>
                <SearchInput placeholder="搜索详情" aria-label="搜索详情" />
                <Lens />
              </SearchBox>
              <GridButton aria-label="属性矩阵">
                <svg width="18" height="18" viewBox="0 0 18 18" stroke="#5c5c5c" strokeWidth="2">
                  <path d="M0 1H4M6 1H11M13 1H18M0 5H4M6 5H11M13 5H18M0 9H4M6 9H11M13 9H18M0 13H4M6 13H11M13 13H18M0 17H4M6 17H11M13 17H18" />
                </svg>
              </GridButton>
              <IconButton aria-label="显示选项"><Eye /><Down /></IconButton>
            </PanelBar>
            <DetailsBody>
              <DetailsList>
                {groups.map((g) => (
                  <React.Fragment key={g.title}>
                    <Category><Corner />{g.title}</Category>
                    <Rows $end={g.end}>
                      {g.rows.map((r) => (
                        <Property key={r.name} {...r} />
                      ))}
                    </Rows>
                    {g.more && <More />}
                  </React.Fragment>
                ))}
              </DetailsList>
              <ScrollTrack><ScrollThumb /></ScrollTrack>
            </DetailsBody>
          </Panel>
        </Column>
      </Main>

      <Taskbar>
        <TaskButton $w={60} aria-label="开始">
          <svg width="20" height="20" viewBox="0 0 20 20"><path d="M0 3L8 2V9.500H0ZM9 1.800L20 0V9.500H9ZM0 10.500H8V18L0 17ZM9 10.500H20V20L9 18.200Z" fill="#fff" /></svg>
        </TaskButton>
        <TaskButton $w={60} aria-label="搜索"><Lens s={21} c="#fff" w={1.5} /></TaskButton>
        <TaskButton $w={60} aria-label="语音助手">
          <svg width="20" height="20" viewBox="0 0 20 20"><circle cx="10" cy="10" r="8.500" fill="none" stroke="#fff" strokeWidth="2.600" /></svg>
        </TaskButton>
        <TaskButton $w={62} aria-label="任务视图">
          <svg width="20" height="20" viewBox="0 0 20 20" fill="none" stroke="#fff" strokeWidth="1.500"><path d="M1 1V4H13V1M1 19V16H13V19M1 6H13V14H1ZM18.500 1V5M18.500 10V19" /><path d="M17 6H20V9H17Z" fill="#fff" stroke="none" /></svg>
        </TaskButton>
        <TaskButton $w={63} aria-label="360浏览器">
          <svg width="30" height="30" viewBox="0 0 30 30">
            <circle cx="15" cy="16" r="12" fill="#4db82c" stroke="#e9f8e0" strokeWidth="2" />
            <path d="M8.500 16H22Q21.500 9.500 15.500 9.500Q8.500 9.500 8.500 16Q9 22 15.500 22Q20 22 21.500 19.500" fill="none" stroke="#fff" strokeWidth="3.600" />
            <path d="M3 28Q2 22 6 17Q14 4 28 2Q28 5 23 9" fill="none" stroke="#5cb82f" strokeWidth="2" />
          </svg>
        </TaskButton>
        <TaskButton $run aria-label="浏览器">
          <svg width="30" height="30" viewBox="0 0 30 30">
            <circle cx="15" cy="15" r="14.500" fill="#fbc116" />
            <path d="M2.500 7.700A14.500 14.500 0 0 1 27.600 7.800H15A7.200 7.200 0 0 0 8.800 18.600Z" fill="#f0423a" />
            <path d="M2.500 7.700L8.800 18.600A7.200 7.200 0 0 0 17 22L14 29.500A14.500 14.500 0 0 1 2.500 7.700Z" fill="#3da45a" />
            <circle cx="15" cy="15" r="7" fill="#fff" />
            <path d="M16 9.500L11 16H14.500L13.500 20.500L19 14H15.500Z" fill="#3b82f6" />
          </svg>
        </TaskButton>
        <TaskButton aria-label="迅雷">
          <svg width="30" height="30" viewBox="500 85 290 290">
            <rect x="500" y="85" width="290" height="290" rx="40" fill="#f4f7ff" />
            <BirdShape id="bird-small" />
          </svg>
        </TaskButton>
        <TaskButton $run aria-label="360安全卫士">
          <svg width="30" height="30" viewBox="0 0 30 30">
            <circle cx="15" cy="15" r="14" fill="#f6cf16" />
            <path d="M2 20A14 14 0 0 0 29 14Q24 27 2 20Z" fill="#3a9b28" />
            <path d="M3 8A14 14 0 0 1 27 8Q15 0 3 8Z" fill="#4bab30" />
            <path d="M15 7V23M7 15H23" stroke="#3f8f1f" strokeWidth="6" />
          </svg>
        </TaskButton>
        <TaskButton $run aria-label="图库"><Petals /></TaskButton>
        <TaskButton $run aria-label="资源管理器">
          <svg width="28" height="24" viewBox="0 0 28 24">
            <path d="M0 0H10L13 3H27V23H0Z" fill="#e2a31c" />
            <path d="M0 5H10L13 3H28V23H0Z" fill="#fbd568" />
            <path d="M5 24V14Q5 12 7 12H21Q23 12 23 14V24H18V18H10V24Z" fill="#3f97dc" />
          </svg>
        </TaskButton>
        <TaskButton $run aria-label="开发工具">
          <svg width="28" height="29" viewBox="0 0 28 29">
            <path d="M0 5L4 3L8 6L20 0L28 3V29H0Z" fill="#68217a" />
            <path d="M2 10L6 8L12 12.500L21 4L26 6V23L21 25L12 17L6 21L2 19ZM5 12V17L8.500 14.500ZM21 10.500L15 14.500L21 18.500Z" fill="#fff" fillRule="evenodd" />
          </svg>
        </TaskButton>
        <TaskButton $run aria-label="搜索工具"><Lens s={28} c="#ff8208" w={3.4} /></TaskButton>
        <TaskButton $run $active aria-label="虚幻编辑器">
          <svg width="28" height="28" viewBox="0 0 28 28">
            <circle cx="14" cy="14" r="13" fill="#161616" stroke="#e8e8e8" strokeWidth="1.500" />
            <g transform="translate(5.200 5) scale(.72)"><UnrealMark /></g>
          </svg>
        </TaskButton>
        <TaskButton $run aria-label="微信">
          <svg width="31" height="26" viewBox="0 0 31 26">
            <ellipse cx="11" cy="9.500" rx="11" ry="9.500" fill="#7fd344" />
            <path d="M4 15L3 21L9 18Z" fill="#7fd344" />
            <circle cx="7.500" cy="6.500" r="1.500" fill="#2f6b1c" /><circle cx="14.500" cy="6.500" r="1.500" fill="#2f6b1c" />
            <ellipse cx="21.500" cy="16.500" rx="9" ry="8" fill="#f0f0f0" />
            <path d="M25 22L28 26L21 24Z" fill="#f0f0f0" />
            <circle cx="18.500" cy="14" r="1.200" fill="#777" /><circle cx="24.500" cy="14" r="1.200" fill="#777" />
          </svg>
        </TaskButton>
        <Tray>
          <svg width="16" height="9" viewBox="0 0 16 9"><path d="M1 8L8 1L15 8" fill="none" stroke="#fff" strokeWidth="1.500" /></svg>
          <svg width="20" height="14" viewBox="0 0 20 14" fill="none" stroke="#fff"><path d="M5 3.500H18.500V12.500H4.500V8M19.500 6V10M1 2H5V5Q3 7 1 5ZM2 0V2M4 0V2M3 6V12H5" /><path d="M9 5H13V11H7V9Z" fill="#fff" /></svg>
          <svg width="16" height="16" viewBox="0 0 16 16" fill="none" stroke="#fff" strokeWidth="1.200"><path d="M1 15A14 14 0 0 1 15 1M5 15A10 10 0 0 1 15 5M9 15A6 6 0 0 1 15 9" /><circle cx="14" cy="14" r="1.300" fill="#fff" /></svg>
          <svg width="19" height="14" viewBox="0 0 19 14" fill="none" stroke="#fff" strokeWidth="1.200"><path d="M1 4.500H3L7 1V13L3 9.500H1ZM11 4L18 11M18 4L11 11" /></svg>
          <TrayText>英</TrayText>
          <Pinyin>拼</Pinyin>
          <svg width="28" height="28" viewBox="0 0 28 28">
            <circle cx="14" cy="14" r="12.500" fill="#0c4c39" stroke="#07d160" strokeWidth="2" />
            <path d="M1.500 12H26.500A12.500 12.500 0 0 1 1.500 12Z" fill="#07d160" />
            <text x="14" y="19" textAnchor="middle" fontSize="14" fill="#fff" fontFamily="Open Sans, sans-serif">71</text>
          </svg>
          <Clock>
            12:10
            <br />
            2020/7/19 星期日
          </Clock>
          <svg width="20" height="20" viewBox="0 0 20 20"><path d="M1 1H19V16H13L10 19L8 16H1Z" fill="none" stroke="#fff" strokeWidth="1.500" /></svg>
          <ShowDesktop aria-label="显示桌面" />
        </Tray>
      </Taskbar>

      <FloatingBird>
        <svg width="92" height="93" viewBox="507 93 276 279">
          <ellipse cx="645" cy="232.500" rx="138" ry="139.500" fill="#f2f5ff" />
          <BirdShape id="bird-large" />
        </svg>
      </FloatingBird>
      <Tooltip role="tooltip">
        {"Draws UV displacement map within the output render target.\n- Red & green channels hold the distortion displacement;\n- Blue & alpha channels hold the undistortion displacement.\n\n目标是Foo Blueprint Function Library"}
      </Tooltip>
      <Activate>
        <ActivateTitle>激活 Windows</ActivateTitle>
        转到“设置”以激活 Windows。
      </Activate>
      <SourceNote>https://blog.csdn.net/directx3d_beginner</SourceNote>
    </Screen>
  );
}
